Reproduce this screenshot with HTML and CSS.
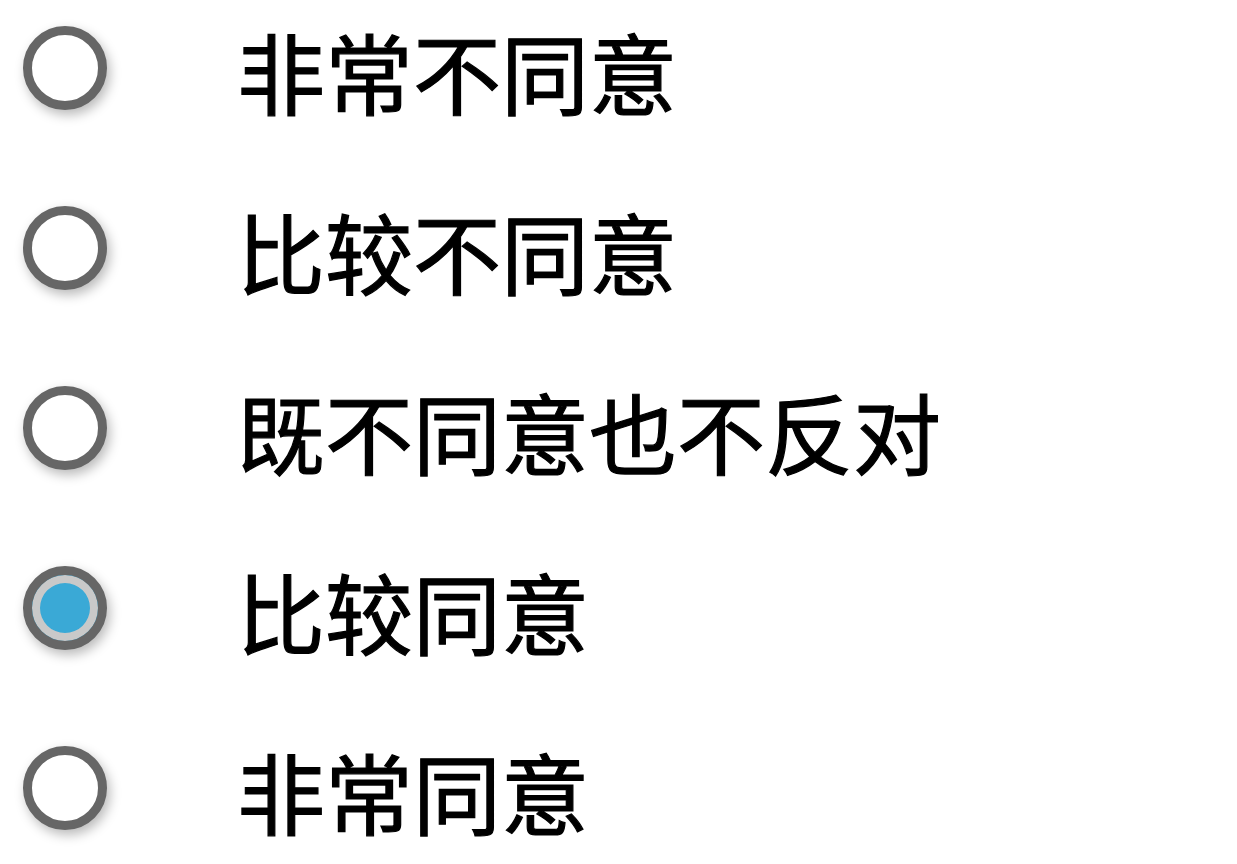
FILE: index.html
```html
<!DOCTYPE html>
<html lang="zh-CN">
<head>
  <meta charset="UTF-8">
  <meta name="viewport" content="width=device-width, initial-scale=1.0">
  <title>态度量表</title>
  <link rel="stylesheet" href="styles.css">
</head>
<body>
  <form class="scale">
    <label class="option">
      <input type="radio" name="answer" value="1">
      <span class="dot"></span>
      <span class="text">非常不同意</span>
    </label>
    <label class="option">
      <input type="radio" name="answer" value="2">
      <span class="dot"></span>
      <span class="text">比较不同意</span>
    </label>
    <label class="option">
      <input type="radio" name="answer" value="3">
      <span class="dot"></span>
      <span class="text">既不同意也不反对</span>
    </label>
    <label class="option">
      <input type="radio" name="answer" value="4" checked>
      <span class="dot"></span>
      <span class="text">比较同意</span>
    </label>
    <label class="option">
      <input type="radio" name="answer" value="5">
      <span class="dot"></span>
      <span class="text">非常同意</span>
    </label>
  </form>
</body>
</html>
```

FILE: styles.css
```css
body {
  margin: 0;
  background: #fff;
  font-family: "Noto Sans CJK SC", "Noto Sans", sans-serif;
  color: #000;
}
.scale {
  display: flex;
  flex-direction: column;
  gap: 44px;
}
.option {
  display: flex;
  align-items: center;
  height: 136px;
  padding-left: 23px;
  cursor: pointer;
}
.option input {
  display: none;
}
.dot {
  box-sizing: border-box;
  width: 84px;
  height: 84px;
  flex-shrink: 0;
  border: 9px solid #666;
  border-radius: 50%;
  background: #fff;
  box-shadow: 3px 5px 12px rgba(0, 0, 0, 0.28);
}
.option input:checked + .dot {
  background: #3aa9d6;
  box-shadow: inset 0 0 0 8px #c9c9c9, 3px 5px 12px rgba(0, 0, 0, 0.28);
}
.text {
  margin-left: 130px;
  font-size: 88px;
  line-height: 1;
  padding-top: 3px;
  -webkit-text-stroke: 1.2px #000;
}
```
